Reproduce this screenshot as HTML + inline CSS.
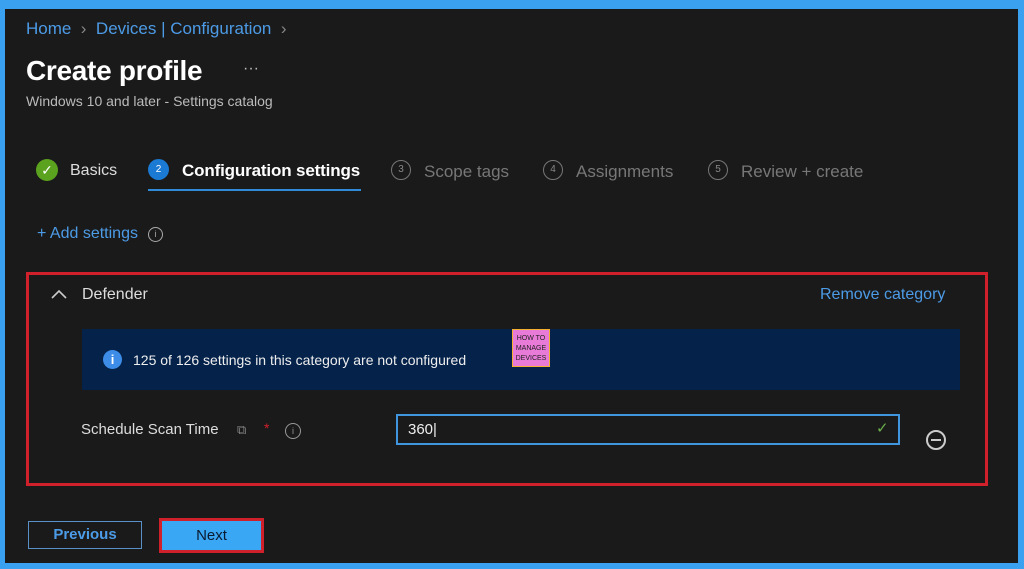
<!DOCTYPE html>
<html><head><style>
body{margin:0;width:1024px;height:569px;background:#3aa0f0;font-family:"Liberation Sans",sans-serif;overflow:hidden;position:relative}
#m{position:absolute;left:5px;top:9px;width:1013px;height:554px;background:#1b1a1a}
.a{position:absolute;white-space:nowrap}
.c{position:absolute;border-radius:50%;box-sizing:border-box;border:1.5px solid #777;color:#888;font-size:10px;text-align:center;line-height:17px;width:20px;height:20px}
</style></head><body>
<div id="m"></div>
<div class="a" style="left:26px;top:19px;font-size:17px;color:#4c9be6">Home <span style="color:#888">&nbsp;›&nbsp;</span> Devices | Configuration <span style="color:#888">&nbsp;›</span></div>
<div class="a" style="left:26px;top:55px;font-size:28px;color:#fff;font-weight:600;letter-spacing:-0.3px">Create profile</div>
<div class="a" style="left:243px;top:60px;font-size:16px;color:#bbb">···</div>
<div class="a" style="left:26px;top:93px;font-size:14px;color:#bbb">Windows 10 and later - Settings catalog</div>
<div class="a" style="left:36px;top:159px;width:22px;height:22px;border-radius:50%;background:#5ba21f;color:#fff;font-size:14px;text-align:center;line-height:22px">✓</div>
<div class="a" style="left:70px;top:162px;font-size:16px;color:#ddd">Basics</div>
<div class="a" style="left:148px;top:159px;width:21px;height:21px;border-radius:50%;background:#1a7ad4;color:#fff;font-size:10px;text-align:center;line-height:21px">2</div>
<div class="a" style="left:182px;top:161px;font-size:17px;color:#fff;font-weight:bold;letter-spacing:-0.15px">Configuration settings</div>
<div class="a" style="left:148px;top:189px;width:213px;height:2px;background:#2f8ad8"></div>
<div class="c" style="left:391px;top:160px">3</div><div class="a" style="left:424px;top:162px;font-size:17px;color:#777">Scope tags</div>
<div class="c" style="left:543px;top:160px">4</div><div class="a" style="left:576px;top:162px;font-size:17px;color:#777">Assignments</div>
<div class="c" style="left:708px;top:160px">5</div><div class="a" style="left:741px;top:162px;font-size:17px;color:#777">Review + create</div>
<div class="a" style="left:37px;top:225px;font-size:16px;color:#4c9be6">+ Add settings</div>
<div class="a" style="left:148px;top:227px;width:13px;height:13px;border:1px solid #aaa;border-radius:50%;font-size:9px;color:#aaa;text-align:center;line-height:13px">i</div>
<div class="a" style="left:26px;top:272px;width:956px;height:208px;border:3px solid #d0202c"></div>
<svg class="a" style="left:50px;top:288px" width="18" height="12"><path d="M2 10 L9 3 L16 10" stroke="#ccc" stroke-width="1.6" fill="none"/></svg>
<div class="a" style="left:82px;top:286px;font-size:16px;color:#ddd">Defender</div>
<div class="a" style="left:820px;top:286px;font-size:16px;color:#4c9be6">Remove category</div>
<div class="a" style="left:82px;top:329px;width:878px;height:61px;background:#04224a"></div>
<div class="a" style="left:103px;top:350px;width:19px;height:19px;border-radius:50%;background:#3d8de8;color:#fff;font-size:13px;font-weight:bold;text-align:center;line-height:19px">i</div>
<div class="a" style="left:133px;top:352px;font-size:14px;color:#eee">125 of 126 settings in this category are not configured</div>
<div class="a" style="left:512px;top:329px;width:38px;height:38px;background:#e87ad8;border:1px solid #f5b030;box-sizing:border-box;font-size:7px;color:#222;text-align:center;line-height:10px;padding-top:4px">HOW TO<br>MANAGE<br>DEVICES</div>
<div class="a" style="left:81px;top:421px;font-size:15px;color:#ddd">Schedule Scan Time</div>
<div class="a" style="left:237px;top:422px;font-size:13px;color:#888">⧉</div>
<div class="a" style="left:264px;top:420px;font-size:14px;color:#d0202c">*</div>
<div class="a" style="left:285px;top:423px;width:14px;height:14px;border:1px solid #999;border-radius:50%;font-size:9px;color:#999;text-align:center;line-height:14px">i</div>
<div class="a" style="left:396px;top:414px;width:500px;height:27px;border:2px solid #3f95de;background:#1b1a1a"></div>
<div class="a" style="left:408px;top:421px;font-size:15px;color:#eee">360|</div>
<div class="a" style="left:876px;top:419px;font-size:15px;color:#6ab04c">✓</div>
<div class="a" style="left:926px;top:430px;width:16px;height:16px;border:2px solid #ccc;border-radius:50%"><div style="position:absolute;left:3px;top:7px;width:10px;height:2px;background:#ccc"></div></div>
<div class="a" style="left:28px;top:521px;width:114px;height:28px;border:1px solid #5a90c8;box-sizing:border-box;color:#4c9be6;font-size:15px;font-weight:bold;text-align:center;line-height:26px">Previous</div>
<div class="a" style="left:159px;top:518px;width:105px;height:35px;border:3px solid #d0202c;box-sizing:border-box;background:#3aa7f5;color:#0a1a30;font-size:15px;text-align:center;line-height:29px">Next</div>
</body></html>
